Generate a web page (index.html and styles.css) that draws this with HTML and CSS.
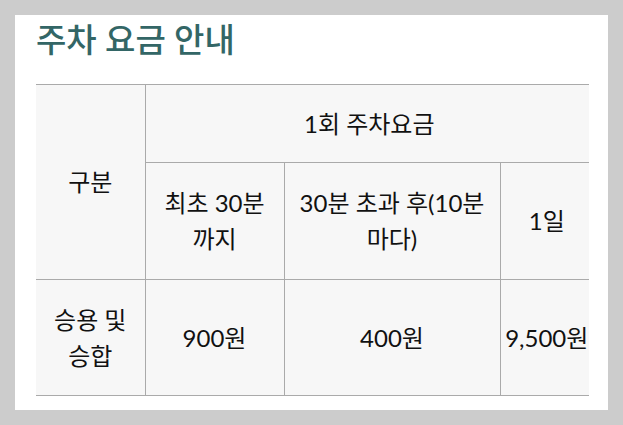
FILE: index.html
```html
<!DOCTYPE html>
<html lang="ko">
<head>
<meta charset="utf-8">
<title>주차 요금 안내</title>
<link rel="stylesheet" href="styles.css">
</head>
<body>
<div class="page">
  <h1 class="title">주차 요금 안내</h1>
  <div class="table-wrap">
    <table class="fee">
      <colgroup>
        <col class="c1"><col class="c2"><col class="c3"><col class="c4">
      </colgroup>
      <tr class="r1">
        <th rowspan="2" class="first">구분</th>
        <th colspan="3">1회 주차요금</th>
      </tr>
      <tr class="r2">
        <th>최초 30분<br>까지</th>
        <th>30분 초과 후(10분<br>마다)</th>
        <th>1일</th>
      </tr>
      <tr class="r3">
        <td class="first">승용 및<br>승합</td>
        <td>900원</td>
        <td>400원</td>
        <td>9,500원</td>
      </tr>
    </table>
  </div>
</div>
</body>
</html>
```

FILE: styles.css
```css
html, body {
  margin: 0;
  padding: 0;
}
body {
  background: #cccccc;
  padding: 15px;
  font-family: Lato, "Noto Sans CJK KR", sans-serif;
}
.page {
  background: #ffffff;
  height: 395px;
  box-sizing: border-box;
  padding: 4px 19px 15px 21px;
}
.title {
  margin: 0 0 24px 0;
  font-size: 33px;
  line-height: 41px;
  font-weight: 500;
  color: #336666;
  letter-spacing: 0;
}
.table-wrap {
  width: 553px;
  overflow: hidden;
}
.fee {
  table-layout: fixed;
  width: 557px;
  border-collapse: collapse;
  background: #f7f7f7;
  font-size: 24px;
  line-height: 36px;
  color: #111111;
}
.c1 { width: 109px; }
.c2 { width: 139px; }
.c3 { width: 216px; }
.c4 { width: 93px; }
.fee th, .fee td {
  font-weight: 400;
  text-align: center;
  vertical-align: middle;
  padding: 0;
  border: 1px solid #aaaaaa;
}
.fee th.first, .fee td.first {
  border-left: none;
}
.fee tr > :last-child {
  border-right: none;
}
.r1 th { height: 77px; }
.r2 th { height: 116px; }
.r3 td { height: 115px; }
```
